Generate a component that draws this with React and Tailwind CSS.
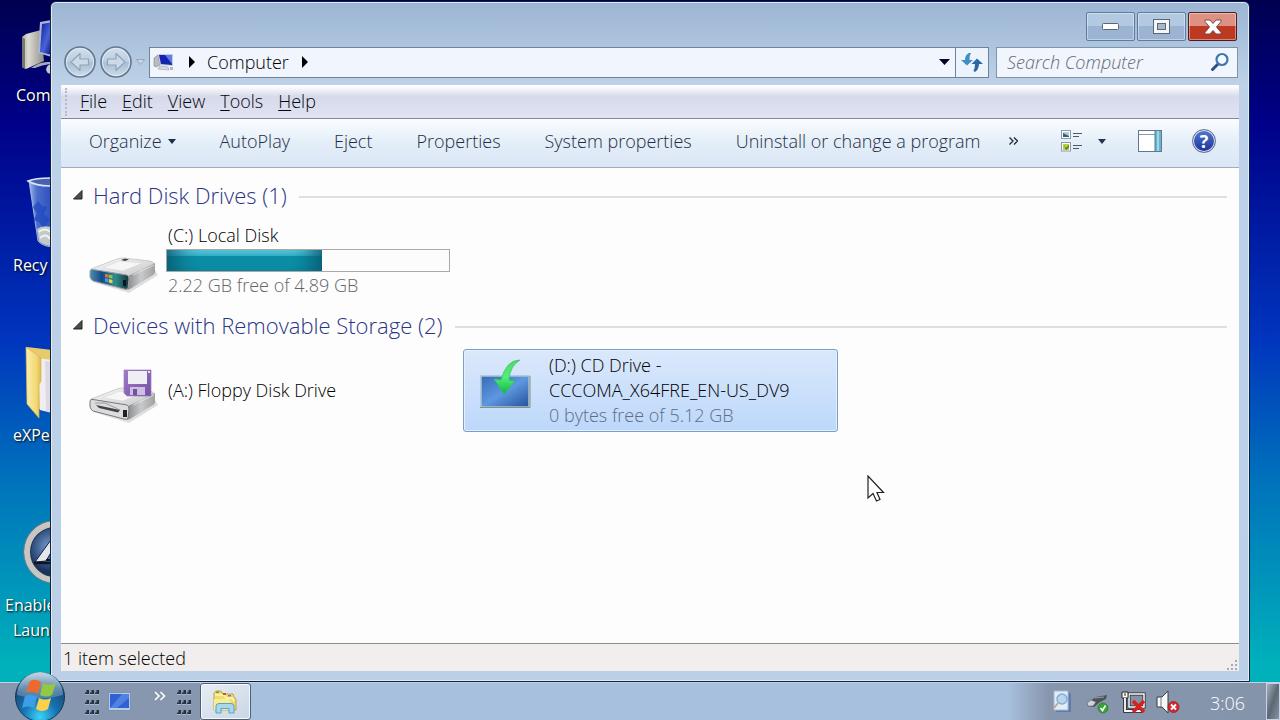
import React from "react";

const desktopItems = [
  { icon: ComputerIcon, lines: ["Com"], pad: "pl-4" },
  { icon: BinIcon, lines: ["Recy"], pad: "pl-[13px]" },
  { icon: FolderIcon, lines: ["eXPe"], pad: "pl-[13px]" },
  { icon: EnableIcon, lines: ["Enable", "Laun"], pad: "pl-[5px]" },
];

function ComputerIcon() {
  return (
    <svg viewBox="0 0 50 72" className="h-[72px] w-[50px] overflow-visible" aria-hidden="true">
      <defs>
        <linearGradient id="tower" x1="0" x2="1"><stop offset="0" stopColor="#b4b4aa" /><stop offset=".3" stopColor="#dcdbd2" /><stop offset="1" stopColor="#8f8f88" /></linearGradient>
        <linearGradient id="screen" x1="0" y1="0" x2="1" y2="1"><stop offset="0" stopColor="#0b1a9e" /><stop offset=".55" stopColor="#4864d8" /><stop offset="1" stopColor="#060b70" /></linearGradient>
      </defs>
      <path d="M22 26 L26 23 L41 19 L44 50 L26 58 L22 56Z" fill="url(#tower)" />
      <path d="M22 26 L25 28 L25 58 L22 56Z" fill="#77776f" />
      <path d="M40 11 L52 9 L52 46 L38 42Z" fill="#aab6d2" />
      <path d="M42 13 L52 11 L52 44 L40 41Z" fill="url(#screen)" />
      <path d="M31 57 Q40 50 50 51 L50 53 Q42 54 35 57Z" fill="#a9adb2" />
      <path d="M46 59 Q47 53 52 53 L52 63 Q47 63 46 59Z" fill="#c3c7d2" />
    </svg>
  );
}

function BinIcon() {
  return (
    <svg viewBox="0 0 50 72" className="h-[72px] w-[50px] overflow-visible" aria-hidden="true">
      <defs>
        <linearGradient id="bin" x1="0" x2="1"><stop offset="0" stopColor="#b8cdf0" stopOpacity=".9" /><stop offset=".35" stopColor="#5d84d8" stopOpacity=".8" /><stop offset="1" stopColor="#365fc4" stopOpacity=".8" /></linearGradient>
      </defs>
      <path d="M29 0 L52 3 L52 66 Q42 65 38 60Z" fill="url(#bin)" stroke="#b9c9e6" strokeWidth=".8" />
      <path d="M28 0 Q36 -3 52 -3 L52 5 Q36 5 28 0Z" fill="#4a5fae" stroke="#dce5f5" strokeWidth="1.500" />
      <path d="M33 26 l5 -6 l4 5 l5 1 l-3 7 l6 5 l-6 10 l-5 -7 l-6 -2 l4 -6z" fill="#1f49c0" opacity=".75" />
      <path d="M37 48 Q42 44 51 46 L51 65 Q42 64 39 60Z" fill="#c2c9cb" />
      <path d="M39 51 q5 -5 12 0 M40 57 q6 -6 11 2" stroke="#f2f2ea" strokeWidth="2" fill="none" />
    </svg>
  );
}

function FolderIcon() {
  return (
    <svg viewBox="0 0 50 72" className="h-[72px] w-[50px] overflow-visible" aria-hidden="true">
      <defs>
        <linearGradient id="fold" x1="0" x2="1"><stop offset="0" stopColor="#fbeeb0" /><stop offset=".7" stopColor="#f2d873" /><stop offset="1" stopColor="#dcb94f" /></linearGradient>
      </defs>
      <path d="M27 -4 L52 -1 L52 60 L38 58Z" fill="#e6ca6c" />
      <path d="M38 7 L52 9 L52 62 L40 59Z" fill="#f0eef2" />
      <path d="M45 10 L52 11 L52 61 L46 60Z" fill="#dcd9e2" />
      <path d="M26 -4 L41 7 L41 30 L39 34 L39 67 L27 53Z" fill="url(#fold)" stroke="#d8b654" strokeWidth=".7" />
    </svg>
  );
}

function EnableIcon() {
  return (
    <svg viewBox="0 0 50 72" className="h-[72px] w-[50px]" aria-hidden="true">
      <defs>
        <radialGradient id="aero" cx=".4" cy=".4"><stop offset="0" stopColor="#7ba1d6" /><stop offset="1" stopColor="#17325f" /></radialGradient>
      </defs>
      <circle cx="55" cy="31" r="28" fill="#26364c" stroke="#c8c6c2" strokeWidth="6" />
      <circle cx="55" cy="31" r="31.500" fill="none" stroke="#70777f" />
      <circle cx="55" cy="31" r="24" fill="url(#aero)" />
      <path d="M35 41 L53 16 L53 28 L46 40Z" fill="#e5e7ec" stroke="#15223a" />
      <path d="M34 42 L53 42" stroke="#0d1526" strokeWidth="2.500" />
      <path d="M46 39 h6" stroke="#0d1526" strokeWidth="2" />
    </svg>
  );
}

function MiniComputer() {
  return (
    <svg viewBox="0 0 22 20" className="h-5 w-[22px] shrink-0" aria-hidden="true">
      <path d="M1 6 L5 3 L7 13 L3 15 L1 14Z" fill="#b9bbbd" stroke="#85888c" strokeWidth=".6" />
      <path d="M5 2 L20 2 L20 14 L7 13Z" fill="#c2cce4" />
      <path d="M6 3 L19 3 L19 13 L8 12Z" fill="#1524b0" />
      <path d="M12 3 L19 3 L19 12Z" fill="#5f7ae4" />
      <path d="M7 14 L15 15 L16 18 L5 17Z" fill="#d8dadd" stroke="#9a9da2" strokeWidth=".6" />
      <path d="M17 15 h3 v3 h-3z" fill="#b5b8bd" />
    </svg>
  );
}

function Arrow({ right }) {
  return (
    <svg viewBox="0 0 32 32" className="h-8 w-8" aria-hidden="true">
      <defs>
        <linearGradient id="navFill" x1="0" y1="0" x2="0" y2="1"><stop offset="0" stopColor="#d3e0ee" /><stop offset=".48" stopColor="#bccedf" /><stop offset=".52" stopColor="#a9bfd5" /><stop offset="1" stopColor="#cbdbea" /></linearGradient>
      </defs>
      <circle cx="16" cy="16" r="15" fill="url(#navFill)" stroke="#66788d" strokeWidth="1.600" />
      <circle cx="16" cy="16" r="13.600" fill="none" stroke="#e2ebf4" strokeWidth=".9" />
      <path
        d={right ? "M25 16 L16 7.5 L16 13 L7.5 13 L7.5 19 L16 19 L16 24.5Z" : "M7 16 L16 7.5 L16 13 L24.5 13 L24.5 19 L16 19 L16 24.5Z"}
        fill="#ccdae8" stroke="#8fa3b8" strokeWidth="1.200" strokeLinejoin="round"
      />
    </svg>
  );
}

function Drive({ floppy }) {
  return (
    <svg viewBox="0 0 70 58" className="h-[58px] w-[70px] overflow-visible" aria-hidden="true">
      <defs>
        <linearGradient id="driveTop" x1="0" y1="0" x2="1" y2="1"><stop offset="0" stopColor="#fafafa" /><stop offset="1" stopColor="#c6c6c8" /></linearGradient>
        <linearGradient id="driveSide" x1="0" y1="0" x2="1" y2="0"><stop offset="0" stopColor="#87898b" /><stop offset=".5" stopColor="#c9cacb" /><stop offset="1" stopColor="#9fa1a3" /></linearGradient>
        <linearGradient id="driveFront" x1="0" x2="1"><stop offset="0" stopColor="#4b8fae" /><stop offset=".3" stopColor="#164a86" /><stop offset=".65" stopColor="#2f8c8c" /><stop offset="1" stopColor="#15333b" /></linearGradient>
        <linearGradient id="disk" x1="0" y1="0" x2="1" y2="1"><stop offset="0" stopColor="#a27ac9" /><stop offset="1" stopColor="#7450a4" /></linearGradient>
      </defs>
      <path d="M4 50 L40 61 L69 43 L66 38Z" fill="#000" opacity=".12" />
      <path d="M2 37 L28 27 Q31 26 35 26 L61 29 Q65 30 65 32 L39 45Z" fill="url(#driveTop)" stroke="#bcbcbe" strokeWidth=".7" />
      <path d="M39 44 L66 31 L66 40 Q66 42 64 43 L41 57 L38 58Z" fill="url(#driveSide)" />
      <path d="M44 43 L65 33" stroke="#eeeeef" strokeWidth="1" opacity=".7" />
      <path d="M14 36 L30 29 L54 31 L34 39Z" fill="#f6f6f7" stroke="#d2d2d4" strokeWidth=".5" />
      {floppy ? (
        <>
          <path d="M1 39 Q1 37 4 37.500 L38 43 Q40 44 40 47 L39 56 Q38 58 35 57 L4 49 Q2 48 1 45Z" fill="#dcdcde" stroke="#77797c" />
          <path d="M7 43 L31 48 L29 50.500 L10 46Z" fill="#444" />
          <path d="M6 41 L16 41 L31 48" fill="none" stroke="#8a8b8d" strokeWidth=".8" />
          <rect x="34" y="48" width="4" height="7" fill="#1d1f20" />
          <path d="M35 8 H62 V34 H38 L35 31Z" fill="url(#disk)" stroke="#9b82bb" strokeWidth=".7" />
          <rect x="39" y="9" width="19" height="13" fill="#f0eef5" />
          <rect x="41" y="25" width="15" height="8" fill="#cdbfe0" />
          <rect x="44" y="27" width="4" height="6" fill="#7450a4" />
          <rect x="59" y="9" width="2" height="2" fill="#e7ddf3" />
        </>
      ) : (
        <>
          <path d="M1 39 Q1 37 4 37.500 L38 43 Q40 44 40 47 L39 56 Q38 58 35 57 L4 49 Q2 48 1 45Z" fill="url(#driveFront)" stroke="#9aa2a8" />
          <path d="M16 42 l3.500 .6 v3.500 l-3.500 -1z" fill="#e9703a" />
          <path d="M20 42.700 l3.500 .6 v3.500 l-3.500 -1z" fill="#8fc04a" />
          <path d="M16 46 l3.500 1 v3.500 l-3.500 -1z" fill="#4a9ae0" />
          <path d="M20 47 l3.500 1 v3.500 l-3.500 -1z" fill="#f4cf48" />
          <rect x="34" y="48" width="3" height="6" fill="#0a1518" />
          <path d="M32 28 l4 -1.500 l4 1 l-4 1.500z" fill="#3f4244" />
        </>
      )}
    </svg>
  );
}

function CdIcon() {
  return (
    <svg viewBox="0 0 52 50" className="mb-3.5 h-[50px] w-[52px]" aria-hidden="true">
      <defs>
        <linearGradient id="cd" x1="0" y1="0" x2="1" y2="1"><stop offset="0" stopColor="#3569b8" /><stop offset=".5" stopColor="#5e98df" /><stop offset="1" stopColor="#245099" /></linearGradient>
        <linearGradient id="green" x1="0" y1="0" x2="0" y2="1"><stop offset="0" stopColor="#4fd869" /><stop offset=".5" stopColor="#50f07a" /><stop offset="1" stopColor="#10b53e" /></linearGradient>
      </defs>
      <rect x="2" y="17" width="48" height="31" fill="url(#cd)" stroke="#a9c3cf" strokeWidth="1.500" />
      <path d="M1 48.500 H51 V17" fill="none" stroke="#7f948f" />
      <path d="M41 1 Q27 1 22 21 L15 20 L25 35 L36 22 L30 21 Q31 7 41 1Z" fill="url(#green)" stroke="#2dbe55" strokeWidth=".6" strokeLinejoin="round" />
    </svg>
  );
}

function Expander() {
  return (
    <svg viewBox="0 0 10 10" className="h-2.5 w-2.5" aria-hidden="true">
      <path d="M9 .5 V9 H.5Z" fill="#4d4d4d" stroke="#222" />
    </svg>
  );
}

function Tile({ icon, children, selected }) {
  return (
    <button
      type="button"
      aria-pressed={!!selected}
      className={
        "flex min-h-[83px] w-[375px] items-center rounded-[3px] border text-left leading-[25px] " +
        (selected ? "border-[#7d9fc6] bg-linear-to-b from-[#dbe8fb] to-[#bdd8fb] shadow-[inset_0_0_0_1px_#e4effd]" : "border-transparent")
      }
    >
      <span className="flex w-[85px] shrink-0 justify-center pr-1">{icon}</span>
      <span className="block min-w-0">{children}</span>
    </button>
  );
}

function Group({ title, children }) {
  return (
    <section className="mb-[3px]">
      <h2 className="flex h-11 items-center text-[22px] text-[#2c3585]">
        <button type="button" className="flex items-center gap-[10px] pb-1 whitespace-nowrap">
          <Expander />
          {title}
        </button>
        <span className="ml-3 h-0.5 flex-1 bg-[#dfdfdf]" />
      </h2>
      <div className="flex flex-wrap gap-[6px] pl-[9px]">{children}</div>
    </section>
  );
}

function Caret() {
  return (
    <svg viewBox="0 0 8 5" className="h-[5px] w-2" aria-hidden="true"><path d="M0 0 H8 L4 5Z" fill="currentColor" /></svg>
  );
}

function Crumb() {
  return (
    <svg viewBox="0 0 6 12" className="h-3 w-[6px]" aria-hidden="true"><path d="M0 0 L6 6 L0 12Z" fill="#000" /></svg>
  );
}

function Grip() {
  return (
    <svg viewBox="0 0 15 26" className="h-[26px] w-[15px]" aria-hidden="true">
      {[1, 11, 21].map((y) =>
        [0, 5, 10].map((x) => (
          <g key={x + "-" + y}>
            <path d={`M${x} ${y + 4} v-1.5 h1.500 v-2.500 h2.500 v4z`} fill="#253242" />
            <rect x={x} y={y + 4} width="4" height="1" fill="#a9b6c8" />
          </g>
        ))
      )}
    </svg>
  );
}

const captionButton =
  "flex h-[29px] items-center justify-center rounded-[2px] border shadow-[inset_0_0_0_1px_rgba(255,255,255,0.4)] ";

function Titlebar() {
  return (
    <div className="flex justify-end gap-0.5 pt-[10px] pr-0.5">
      <button type="button" aria-label="Minimize" className={captionButton + "w-[49px] border-[#5f7a9c] bg-linear-to-b from-[#b3c9e2] from-50% to-[#9bb4d1] to-50%"}>
        <svg viewBox="0 0 17 7" className="h-[7px] w-[17px]" aria-hidden="true"><rect x=".5" y=".5" width="16" height="6" rx="1" fill="#fff" stroke="#5b6677" /></svg>
      </button>
      <button type="button" aria-label="Maximize" className={captionButton + "w-[49px] border-[#5f7a9c] bg-linear-to-b from-[#b3c9e2] from-50% to-[#9bb4d1] to-50%"}>
        <svg viewBox="0 0 17 15" className="h-[15px] w-[17px]" aria-hidden="true">
          <rect x=".5" y=".5" width="16" height="14" fill="#f4f6f8" stroke="#5b6677" />
          <rect x="4.500" y="4.500" width="8" height="6" fill="#a9b8c9" stroke="#5b6677" />
        </svg>
      </button>
      <button type="button" aria-label="Close" className={captionButton + "w-[49px] border-[#4d1d1f] bg-linear-to-b from-[#dd9182] from-50% to-[#bd3922] to-50%"}>
        <svg viewBox="0 0 18 16" className="h-4 w-[18px]" aria-hidden="true">
          <path d="M1 1 H6 L9 4.500 L12 1 H17 L17 2.500 L12.500 8 L17 13.500 V15 H12 L9 11.500 L6 15 H1 V13.500 L5.500 8 L1 2.500Z" fill="#fff" stroke="#7c4a48" />
        </svg>
      </button>
    </div>
  );
}

function Navigation() {
  return (
    <div className="mt-[5px] flex items-center pb-[7px] pl-[3px] pr-px">
      <div className="flex items-center gap-1 pr-1">
        <button type="button" aria-label="Back"><Arrow /></button>
        <button type="button" aria-label="Forward"><Arrow right /></button>
        <button type="button" aria-label="Recent locations">
          <svg viewBox="0 0 9 6" className="h-[6px] w-[9px]" aria-hidden="true"><path d="M.5 .5 H8.500 L4.500 5.500Z" fill="#c9d9ea" stroke="#8fa5bd" /></svg>
        </button>
      </div>
      <nav aria-label="Address" className="flex h-[31px] min-w-0 flex-1 items-center border border-[#6f8298] bg-[#f1f5fd] pl-[3px] pr-[5px]">
        <MiniComputer />
        <span className="ml-[14px]"><Crumb /></span>
        <a href="#computer" className="ml-3 text-[18px] text-black">Computer</a>
        <span className="ml-[13px]"><Crumb /></span>
        <button type="button" aria-label="Previous locations" className="ml-auto text-[#05052a]">
          <svg viewBox="0 0 11 6" className="h-[6px] w-[11px]" aria-hidden="true"><path d="M0 0 H11 L5.500 6Z" fill="currentColor" /></svg>
        </button>
      </nav>
      <button type="button" aria-label="Refresh" className="flex h-[31px] w-[33px] items-center justify-center border border-l-0 border-[#6f8298] bg-[#edf3fc]">
        <svg viewBox="0 0 22 20" className="h-5 w-[22px]" aria-hidden="true">
          <path d="M8 1 Q4 3 4 8 H0 L6 13.500 L12 8 H8.500 Q8 4 10 1Z" fill="#3f8ec4" />
          <path d="M14 20 Q18 17 18 12 H22 L16 6.500 L10.500 12 H14 Q14 16 12.500 19Z" fill="#2b66a6" />
        </svg>
      </button>
      <label className="ml-[7px] flex h-[31px] w-[242px] items-center border border-[#7f93aa] bg-[#f1f5fd] pl-[10px] pr-[7px]">
        <input type="search" aria-label="Search Computer" placeholder="Search Computer" className="w-full min-w-0 bg-transparent text-[18px] italic text-[#333] outline-none placeholder:text-[#666b74]" />
        <svg viewBox="0 0 20 20" className="h-5 w-5 shrink-0" aria-hidden="true">
          <path d="M8.500 11.500 L2.500 17.500" stroke="#2c4f87" strokeWidth="3" strokeLinecap="round" />
          <circle cx="12" cy="7.500" r="5.500" fill="#f3f8ff" stroke="#3c79b0" strokeWidth="2.200" />
        </svg>
      </label>
    </div>
  );
}

function Toolbar() {
  return (
    <div className="flex h-[49px] items-center border-b border-[#9eacc2] bg-linear-to-b from-[#fbfdff] via-[#e5eff9] via-45% to-[#dbe6f6] pl-[6px] pr-[23px] pb-1 text-[18px] text-[#1f2d45]">
      <button type="button" className="flex items-center gap-[6px] px-[22px] whitespace-nowrap">Organize <Caret /></button>
      {["AutoPlay", "Eject", "Properties", "System properties", "Uninstall or change a program"].map((label) => (
        <button key={label} type="button" className="px-[22px] whitespace-nowrap">{label}</button>
      ))}
      <button type="button" aria-label="More commands" className="ml-1.5">
        <svg viewBox="0 0 9 8" className="h-2 w-[9px]" aria-hidden="true"><path d="M.5 .5 L4 4 L.5 7.500 M5 .5 L8.500 4 L5 7.500" fill="none" stroke="#1f2937" strokeWidth="1.300" /></svg>
      </button>
      <div className="ml-auto flex items-center">
        <button type="button" aria-label="Change your view" className="flex items-center gap-[15px] text-[#26344d]">
          <svg viewBox="0 0 22 22" className="h-[22px] w-[22px]" aria-hidden="true">
            <rect x=".5" y=".5" width="9" height="8" fill="#fff" stroke="#8d9aa8" />
            <path d="M2 2 H8 V7 H2Z" fill="#a9d1e4" /><path d="M2 3 L8 6 V7 H2Z" fill="#35616e" />
            <rect x=".5" y="12.500" width="9" height="8.500" fill="#fff" stroke="#8d9aa8" />
            <path d="M2 14 H8 V20 H2Z" fill="#b7cf42" /><path d="M3 15 l2 3 l3 -3 v2 l-3 3z" fill="#48722b" />
            <path d="M12 3.500 H21 M12 6.500 H18 M12 15.500 H21 M12 18.500 H18" stroke="#4c5865" />
          </svg>
          <Caret />
        </button>
        <button type="button" aria-label="Show the preview pane" className="ml-8">
          <svg viewBox="0 0 24 22" className="h-[22px] w-6" aria-hidden="true">
            <rect x=".5" y=".5" width="23" height="21" fill="#fff" stroke="#61778f" />
            <path d="M1 4.500 H17" stroke="#8799ab" /><rect x="17" y="1" width="6" height="20" fill="#69b4cd" /><path d="M17 1 V21" stroke="#42819b" /><rect x="19" y="1" width="2" height="20" fill="#a1d7e5" />
          </svg>
        </button>
        <button type="button" aria-label="Get help" className="ml-[30px] flex h-6 w-6 items-center justify-center rounded-full border border-[#6b7896] bg-linear-to-b from-[#5579cf] to-[#1c2f9a] text-[18px] leading-none font-bold text-white shadow-[inset_0_0_0_1px_#dce4f4]">?</button>
      </div>
    </div>
  );
}

function ExplorerWindow() {
  return (
    <main className="relative mt-px mr-[30px] ml-[50px] flex min-w-0 flex-1 flex-col rounded-t-[6px] border border-[#11223a] bg-linear-to-b from-[#9cb5d3] via-[#bdd2e8] via-12% to-[#bbd0e6] px-[10px] pb-[10px] shadow-[inset_0_0_0_1px_#dcebf7]">
      <Titlebar />
      <Navigation />
      <div className="flex h-[34px] items-center border-b border-[#85899c] bg-linear-to-b from-[#fdfdff] from-5% via-[#d6daea] via-35% to-[#e0e3f2] pl-1">
        <span className="h-7 border-l-2 border-dotted border-[#b3b8ca]" />
        <div role="menubar" aria-label="Menu" className="flex gap-[15px] pl-[13px] text-[18px] text-[#05050c]">
          {["File", "Edit", "View", "Tools", "Help"].map((name) => (
            <button key={name} type="button" role="menuitem">
              <span className="underline underline-offset-2">{name[0]}</span>{name.slice(1)}
            </button>
          ))}
        </div>
      </div>
      <Toolbar />
      <div className="min-h-0 flex-1 bg-[#fdfdfd] pt-[7px] pr-3 pl-3 text-[18px] text-black">
        <Group title="Hard Disk Drives (1)">
          <Tile icon={<Drive />}>
            <span className="block">(C:) Local Disk</span>
            <span role="meter" aria-label="Space used" aria-valuemin={0} aria-valuemax={100} aria-valuenow={55} className="-ml-0.5 my-px block h-[23px] w-[284px] border border-[#a8a8a8] bg-[#fcfcfc]">
              <span
                className="block h-full bg-linear-to-b from-[#5fd2e6] from-5% via-[#32b3cc] via-28% to-transparent to-28%"
                style={{ width: "55%", backgroundColor: "#0d90a8", boxShadow: "inset 24px 0 24px -16px #07566c, inset -24px 0 24px -16px #07566c" }}
              />
            </span>
            <span className="block text-[#666]">2.22 GB free of 4.89 GB</span>
          </Tile>
        </Group>
        <Group title="Devices with Removable Storage (2)">
          <Tile icon={<Drive floppy />}>(A:) Floppy Disk Drive</Tile>
          <Tile selected icon={<CdIcon />}>
            <span className="block">(D:) CD Drive -</span>
            <span className="block">CCCOMA_X64FRE_EN-US_DV9</span>
            <span className="block text-[#5c6d86]">0 bytes free of 5.12 GB</span>
          </Tile>
        </Group>
      </div>
      <footer className="flex h-7 items-center justify-between border-t border-[#8b8f94] bg-[#f1eeed] pl-0.5 text-[18px] text-black">
        <span className="pt-0.5">1 item selected</span>
        <svg viewBox="0 0 12 12" className="mr-px h-3 w-3 self-end" aria-hidden="true">
          <path d="M9 1h2v2h-2z M5 5h2v2h-2z M9 5h2v2h-2z M1 9h2v2h-2z M5 9h2v2h-2z M9 9h2v2h-2z" fill="#a5a9b2" />
        </svg>
      </footer>
    </main>
  );
}

function StartOrb() {
  return (
    <svg viewBox="0 0 52 52" className="h-[52px] w-[52px]" aria-hidden="true">
      <defs>
        <radialGradient id="orb" cx=".5" cy=".9" r=".85"><stop offset="0" stopColor="#3ad4fb" /><stop offset=".4" stopColor="#1674b4" /><stop offset=".8" stopColor="#1c4a78" /><stop offset="1" stopColor="#4d7c9f" /></radialGradient>
        <linearGradient id="gloss" x1="0" y1="0" x2="0" y2="1"><stop offset="0" stopColor="#d8e8f2" stopOpacity=".85" /><stop offset="1" stopColor="#8cb2cb" stopOpacity=".35" /></linearGradient>
      </defs>
      <circle cx="26" cy="26" r="24.500" fill="url(#orb)" stroke="#0e3a5c" />
      <path d="M3 24 A23 23 0 0 1 49 24 Q26 31 3 24Z" fill="url(#gloss)" />
      <path d="M16 10 Q21 7 27 11 L24 23 Q18 19 12 22Z" fill="#ec6a2b" />
      <path d="M29 12 Q35 15 42 12 L38 24 Q32 27 26 24Z" fill="#92c842" />
      <path d="M11 25 Q17 22 23 26 L20 37 Q14 34 8 37Z" fill="#3d9de6" />
      <path d="M25 27 Q31 30 37 27 L34 38 Q28 42 22 38Z" fill="#fcd04a" />
    </svg>
  );
}

function Taskbar() {
  return (
    <footer className="relative flex h-[38px] items-center border-t border-[#c3d3e6] bg-[#a7c0de]">
      <div className="flex h-full items-center bg-[#8797af] pr-2 pl-[14px]">
        <button type="button" aria-label="Start" className="-mt-2.5"><StartOrb /></button>
        <div className="ml-[19px]"><Grip /></div>
        <button type="button" aria-label="Show desktop" className="ml-2">
          <svg viewBox="0 0 23 19" className="h-[19px] w-[23px]" aria-hidden="true">
            <rect x=".5" y=".5" width="22" height="18" fill="#b9cbe4" stroke="#7a92b5" /><rect x="2" y="2" width="19" height="14" fill="#2f62d0" /><path d="M2 16 L14 2 H21 V6 L9 16Z" fill="#6c9df0" opacity=".55" />
          </svg>
        </button>
        <button type="button" aria-label="More shortcuts" className="mb-3 ml-[23px]">
          <svg viewBox="0 0 12 10" className="h-[10px] w-3" aria-hidden="true"><path d="M1 1 L5 5 L1 9 M6.500 1 L10.500 5 L6.500 9" fill="none" stroke="#fff" strokeWidth="1.600" /></svg>
        </button>
        <div className="ml-[11px]"><Grip /></div>
      </div>
      <button type="button" aria-label="Computer" className="flex h-[37px] w-[51px] items-center justify-center rounded-[3px] border border-[#4c6079] bg-linear-to-br from-[#e8edf3] to-[#c9d6e6] shadow-[inset_0_0_0_1px_#f4f8fc]">
        <svg viewBox="0 0 27 24" className="h-6 w-[27px]" aria-hidden="true">
          <path d="M2 3 L4 1 H9 L10 3 L13 4 H21 L22 7 L24 9 V20 H2Z" fill="#f1dc6e" stroke="#b99334" strokeWidth=".8" />
          <path d="M3 5 H12 L14 8 H20 L22 11" stroke="#fff6b4" strokeWidth="1.500" fill="none" />
          <path d="M4 1.500h3v1.500h-3z" fill="#55a44a" /><path d="M11 3h3v2h-3z" fill="#d94d37" /><path d="M16 5h3v1.500h-3z" fill="#4a86c8" />
          <path d="M2 9 H17 L19 12 V20 H2Z" fill="#f8ec94" />
          <path d="M4 23 V16 Q4 13.500 7 13.500 H19 Q22 13.500 22 16 V23 H17 V18.500 H9 V23Z" fill="#a7d8ee" stroke="#4f9cc4" strokeWidth=".9" />
        </svg>
      </button>
      <div className="ml-auto flex h-full items-center bg-linear-to-r from-transparent via-[#8796ad] via-15% to-[#8494aa] pl-[45px]">
        <button type="button" aria-label="Search service">
          <svg viewBox="0 0 19 23" className="h-[23px] w-[19px]" aria-hidden="true">
            <path d="M3 2 H16 L18 4 V22 H3Z" fill="#5d7ea9" /><path d="M1 1 H15 V20 H1Z" fill="#e3edf8" stroke="#a4bad5" /><circle cx="9" cy="9" r="5" fill="#b7d6ee" stroke="#89acd0" strokeWidth="1.500" /><path d="M5 13 L1 18" stroke="#c2a58f" strokeWidth="2" />
          </svg>
        </button>
        <button type="button" aria-label="Safely remove hardware" className="mt-1 ml-[14px]">
          <svg viewBox="0 0 23 20" className="h-5 w-[23px]" aria-hidden="true">
            <path d="M1 9 L10 3 L21 1 L20 5 L14 8 L8 13 L2 12Z" fill="#4c5358" /><path d="M1 9 L5 6 L10 8 L7 12 L2 12Z" fill="#cfd4d5" stroke="#5f666a" strokeWidth=".6" /><path d="M9 4 L18 3" stroke="#9ba2a6" />
            <circle cx="17" cy="14" r="5" fill="#39a235" stroke="#1c7323" strokeWidth=".6" /><path d="M14.500 14 L16.500 16.500 L19.500 11.500" fill="none" stroke="#fff" strokeWidth="1.600" />
          </svg>
        </button>
        <button type="button" aria-label="Network disconnected" className="ml-3">
          <svg viewBox="0 0 25 24" className="h-6 w-[25px]" aria-hidden="true">
            <path d="M8 4 H23 V17 H8Z" fill="#8492a6" stroke="#222" strokeWidth="3" /><path d="M8 4 H23 V17 H8Z" fill="none" stroke="#fff" strokeWidth="1.500" />
            <path d="M4 8 V21 H21" fill="none" stroke="#222" strokeWidth="3.500" /><path d="M1 2 H7 V8 H1Z" fill="#fff" stroke="#222" /><path d="M4 3 V6" stroke="#222" /><path d="M4 8 V21 H20" fill="none" stroke="#fff" strokeWidth="1.800" />
            <path d="M12 11 L23 22 M23 11 L12 22" stroke="#d91e20" strokeWidth="3.500" />
          </svg>
        </button>
        <button type="button" aria-label="Volume muted" className="ml-[10px]">
          <svg viewBox="0 0 24 24" className="h-6 w-6" aria-hidden="true">
            <path d="M1 7 H6 L12 1 V23 L6 17 H1Z" fill="#f5f7f9" stroke="#353d48" /><path d="M5 7 V17" stroke="#777f8b" />
            <circle cx="17.500" cy="17" r="5.500" fill="#d9272a" stroke="#8e1518" strokeWidth=".6" /><path d="M15 14.500 L20 19.500 M20 14.500 L15 19.500" stroke="#fff" strokeWidth="1.800" />
          </svg>
        </button>
        <time dateTime="03:06" className="ml-[30px] pt-1 text-[18px] text-white">3:06</time>
        <button type="button" aria-label="Peek at desktop" className="ml-[21px] h-full w-[14px] border border-[#c8d3df] bg-linear-to-br from-[#a8b1bd] via-[#5d6877] to-[#8792a2]" />
      </div>
    </footer>
  );
}

export default function App() {
  return (
    <div className="relative flex h-screen min-h-[560px] flex-col overflow-hidden bg-[linear-gradient(#000050,#000088_17%,#0035bd_47%,#0070bb_66%,#00b0bb_92%)] font-['Open_Sans','Noto_Sans',sans-serif] font-light">
      <aside aria-label="Desktop" className="absolute inset-y-0 left-0 w-[50px] overflow-hidden pt-[11px] text-[16px] leading-[25px] font-normal text-white [text-shadow:1px_1px_2px_#000]">
        {desktopItems.map(({ icon: Icon, lines, pad }, i) => (
          <a key={i} href="#desktop" className="block h-[170px] whitespace-nowrap">
            <Icon />
            {lines.map((line) => (
              <span key={line} className={"block " + (line === "Laun" ? "pl-[13px]" : pad)}>{line}</span>
            ))}
          </a>
        ))}
      </aside>
      <ExplorerWindow />
      <Taskbar />
      <svg viewBox="0 0 19 28" className="pointer-events-none absolute top-[475px] left-[867px] h-7 w-[19px]" aria-hidden="true">
        <path d="M1 1 V23 L6 18.500 L9.500 26 L13 24.500 L10 17.500 H16.500Z" fill="#fff" stroke="#222" strokeWidth="1.200" />
      </svg>
    </div>
  );
}
